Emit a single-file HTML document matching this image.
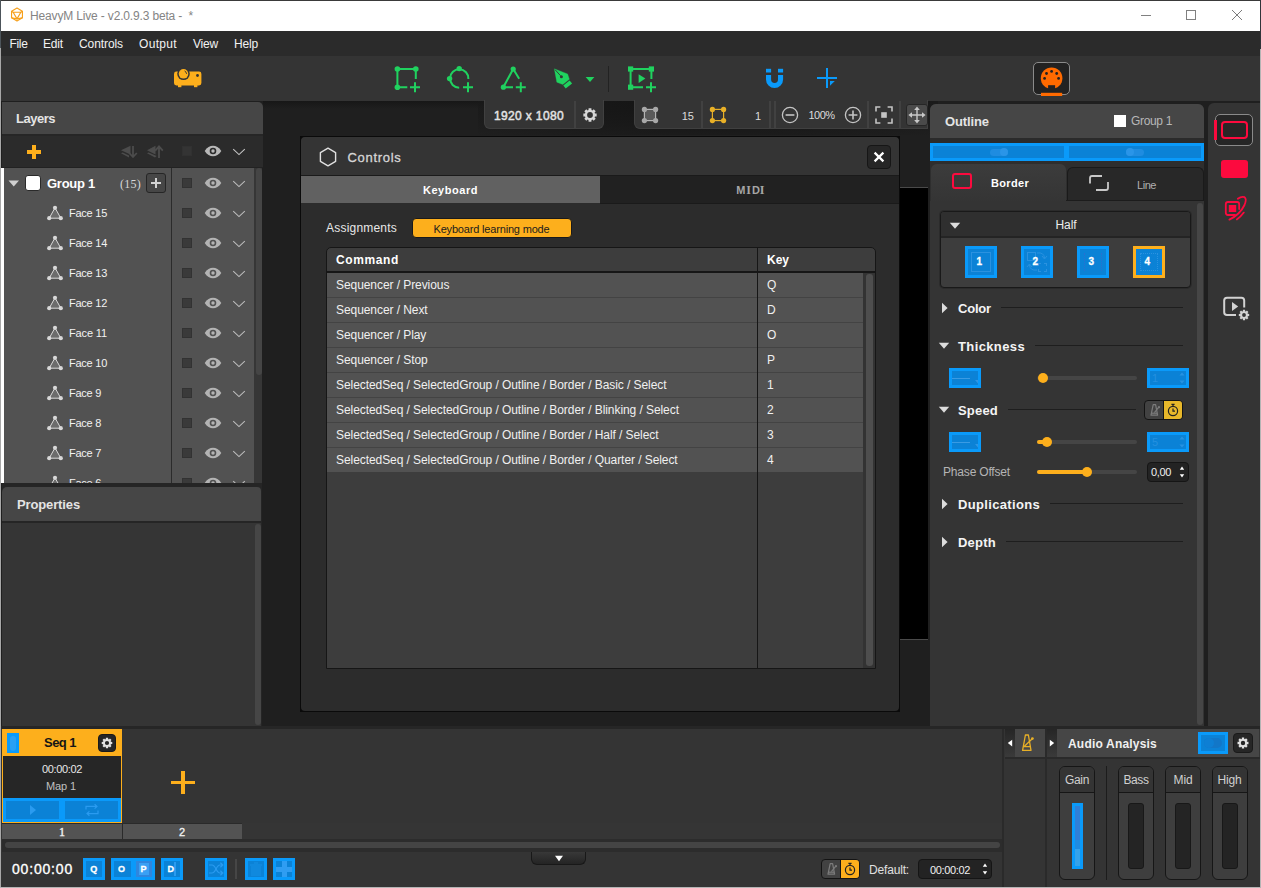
<!DOCTYPE html>
<html><head><meta charset="utf-8"><title>HeavyM Live</title>
<style>
html,body{margin:0;padding:0;}
body{width:1261px;height:888px;overflow:hidden;position:relative;background:#1f1f1f;font-family:"Liberation Sans", sans-serif;}
#app{position:absolute;left:0;top:0;width:1261px;height:888px;overflow:hidden;}
#app div,#app span,#app svg{position:absolute;box-sizing:border-box;}
#app span{line-height:normal;}
</style></head><body><div id="app">
<div style="left:0px;top:0px;width:1261px;height:31px;background:#ffffff;"></div>
<div style="left:0px;top:0px;width:1261px;height:1px;background:#3a3a3a;"></div>
<svg style="left:10px;top:7.2px;" width="14" height="15.75" viewBox="0 0 16 18"><g fill="none" stroke="#f6a01c" stroke-width="1.3" stroke-linejoin="round"><path d="M8 1.2 L14.2 4.8 L14.2 12.4 L8 16 L1.8 12.4 L1.8 4.8 Z"/><path d="M3.6 6 L12.4 6 L8 13.6 Z"/><path d="M1.8 4.8 L3.6 6 M14.2 4.8 L12.4 6 M1.8 12.4 L8 13.6 M14.2 12.4 L8 13.6"/></g></svg>
<span style="left:30.00px;top:9px;font-size:12px;font-weight:400;color:#848484;white-space:pre;letter-spacing:-0.159px;">HeavyM Live - v2.0.9.3 beta -  *</span>
<div style="left:1141px;top:15px;width:10px;height:1px;background:#808080;"></div>
<div style="left:1186px;top:10px;width:10px;height:10px;border:1px solid #808080;"></div>
<svg style="left:1232px;top:10px;" width="10" height="10" viewBox="0 0 10 10"><path d="M0 0 L10 10 M10 0 L0 10" stroke="#7c7c7c" stroke-width="1" fill="none"/></svg>
<div style="left:0px;top:31px;width:1261px;height:25px;background:#2b2b2b;"></div>
<span style="left:9.50px;top:37px;font-size:12px;font-weight:400;color:#f2f2f2;white-space:pre;letter-spacing:-0.336px;">File</span>
<span style="left:43.00px;top:37px;font-size:12px;font-weight:400;color:#f2f2f2;white-space:pre;letter-spacing:-0.172px;">Edit</span>
<span style="left:79.00px;top:37px;font-size:12px;font-weight:400;color:#f2f2f2;white-space:pre;letter-spacing:-0.086px;">Controls</span>
<span style="left:139.00px;top:37px;font-size:12px;font-weight:400;color:#f2f2f2;white-space:pre;letter-spacing:0.328px;">Output</span>
<span style="left:193.00px;top:37px;font-size:12px;font-weight:400;color:#f2f2f2;white-space:pre;letter-spacing:-0.199px;">View</span>
<span style="left:234.00px;top:37px;font-size:12px;font-weight:400;color:#f2f2f2;white-space:pre;letter-spacing:-0.172px;">Help</span>
<div style="left:0px;top:56px;width:1261px;height:45px;background:#343434;"></div>
<div style="left:0px;top:101px;width:1261px;height:628px;background:#1f1f1f;"></div>
<div style="left:263px;top:101px;width:667px;height:8px;background:linear-gradient(#171717,rgba(31,31,31,0));"></div>
<div style="left:2px;top:102px;width:261px;height:32px;background:#464646;border-radius:0 5px 0 0;"></div>
<span style="left:16.00px;top:111px;font-size:13px;font-weight:700;color:#e4e4e4;white-space:pre;letter-spacing:-0.487px;">Layers</span>
<div style="left:2px;top:134px;width:261px;height:2px;background:#262626;"></div>
<div style="left:2px;top:136px;width:261px;height:32px;background:#2b2b2b;"></div>
<div style="left:2px;top:167px;width:261px;height:1px;background:#222222;"></div>
<div style="left:2px;top:168px;width:260px;height:315px;background:#525252;"></div>
<div style="left:1px;top:168px;width:3px;height:315px;background:#ffffff;"></div>
<div style="left:171px;top:168px;width:1px;height:315px;background:#2b2b2b;"></div>
<div style="left:254px;top:168px;width:8px;height:315px;background:#363636;"></div>
<div style="left:256px;top:168px;width:6px;height:207px;background:#454545;border-radius:3px;"></div>
<div style="left:2px;top:483px;width:260px;height:243px;background:#252525;"></div>
<div style="left:2px;top:487px;width:259px;height:34px;background:#464646;border-radius:5px 4px 0 0;"></div>
<span style="left:17.00px;top:497px;font-size:13px;font-weight:700;color:#e4e4e4;white-space:pre;letter-spacing:-0.131px;">Properties</span>
<div style="left:2px;top:523px;width:259px;height:203px;background:#353535;"></div>
<div style="left:255px;top:524px;width:6px;height:201px;background:#464646;border-radius:3px;"></div>
<div style="left:0px;top:726px;width:1261px;height:3px;background:#262626;"></div>
<div style="left:0px;top:729px;width:1261px;height:159px;background:#353535;"></div>
<div style="left:27px;top:150px;width:14px;height:4px;background:#fdaf1c;"></div>
<div style="left:32px;top:145px;width:4px;height:14px;background:#fdaf1c;"></div>
<svg style="left:120px;top:145px;" width="18" height="14" viewBox="0 0 18 14"><g fill="#4c4c4c"><path d="M1 5.2 L10.5 0.8 L10.5 9.6 Z"/><path d="M1 8.2 L9 12.4 L9 10.6 L2.6 7.4 Z"/></g><path d="M13 1 L13 11.5 M9.2 8 L13 12 L16.8 8" fill="none" stroke="#4c4c4c" stroke-width="1.8"/></svg>
<svg style="left:146px;top:145px;" width="18" height="14" viewBox="0 0 18 14"><g fill="#4c4c4c"><path d="M1 5.2 L9.5 0.8 L9.5 9.6 Z"/><path d="M1 8.2 L9 12.4 L10.6 11 L2.6 7.4 Z"/></g><path d="M13 13 L13 2 M9.2 5.6 L13 1.4 L16.8 5.6" fill="none" stroke="#4c4c4c" stroke-width="1.8"/></svg>
<div style="left:182px;top:146px;width:10px;height:10px;background:#343434;border:1px solid #313131;"></div>
<svg style="left:204px;top:145px;" width="18" height="12" viewBox="0 0 18 12"><path d="M0.7 6 C3 2.2 6 0.8 9 0.8 C12 0.8 15 2.2 17.3 6 C15 9.8 12 11.2 9 11.2 C6 11.2 3 9.8 0.7 6 Z" fill="#b8b8b8"/><circle cx="9" cy="6" r="3.3" fill="#2b2b2b"/><circle cx="9" cy="6" r="1.7" fill="#b8b8b8"/></svg>
<svg style="left:232px;top:147.5px;" width="14" height="8" viewBox="0 0 14 8"><path d="M1.2 1.2 L7 6.6 L12.8 1.2" fill="none" stroke="#c4c4c4" stroke-width="1.1"/></svg>
<svg style="left:7px;top:178px;" width="14" height="10" viewBox="0 0 14 10"><path d="M1.5 2.6 L12 2.6 L6.75 8.6 Z" fill="#d0d0d0"/></svg>
<div style="left:25px;top:175px;width:16px;height:16px;background:#ffffff;border:1px solid #2a2a2a;border-radius:3px;"></div>
<span style="left:47.00px;top:176px;font-size:13px;font-weight:700;color:#ffffff;white-space:pre;letter-spacing:-0.263px;">Group 1</span>
<span style="left:120.00px;top:177px;font-size:12px;font-weight:400;color:#d8d8d8;white-space:pre;letter-spacing:0.250px;font-family:'Liberation Serif',serif;">(15)</span>
<div style="left:146px;top:173px;width:20px;height:20px;background:#464646;border:1px solid #262626;border-radius:3px;"></div>
<div style="left:151px;top:182px;width:10px;height:2px;background:#d2d2d2;"></div>
<div style="left:155px;top:178px;width:2px;height:10px;background:#d2d2d2;"></div>
<div style="left:182px;top:178px;width:10px;height:10px;background:#3a3a3a;border:1px solid #323232;"></div>
<svg style="left:204px;top:177px;" width="18" height="12" viewBox="0 0 18 12"><path d="M0.7 6 C3 2.2 6 0.8 9 0.8 C12 0.8 15 2.2 17.3 6 C15 9.8 12 11.2 9 11.2 C6 11.2 3 9.8 0.7 6 Z" fill="#b4b4b4"/><circle cx="9" cy="6" r="3.3" fill="#525252"/><circle cx="9" cy="6" r="1.7" fill="#b4b4b4"/></svg>
<svg style="left:232px;top:179.5px;" width="14" height="8" viewBox="0 0 14 8"><path d="M1.2 1.2 L7 6.6 L12.8 1.2" fill="none" stroke="#bcbcbc" stroke-width="1.1"/></svg>
<div style="left:4px;top:198px;width:250px;height:285px;overflow:hidden;">
<svg style="left:43px;top:7px;" width="16" height="16" viewBox="0 0 16 16"><path d="M8 2.8 L2.2 13.2 L13.8 13.2 Z" fill="#6c6c6c" stroke="#d8d8d8" stroke-width="1"/><circle cx="8" cy="2.8" r="2.1" fill="#d8d8d8"/><circle cx="2.2" cy="13.2" r="2.1" fill="#d8d8d8"/><circle cx="13.8" cy="13.2" r="2.1" fill="#d8d8d8"/></svg>
<span style="left:65.00px;top:9px;font-size:11px;font-weight:400;color:#f2f2f2;white-space:pre;letter-spacing:-0.250px;">Face 15</span>
<div style="left:178px;top:10px;width:10px;height:10px;background:#3a3a3a;border:1px solid #323232;"></div>
<svg style="left:200px;top:9px;" width="18" height="12" viewBox="0 0 18 12"><path d="M0.7 6 C3 2.2 6 0.8 9 0.8 C12 0.8 15 2.2 17.3 6 C15 9.8 12 11.2 9 11.2 C6 11.2 3 9.8 0.7 6 Z" fill="#b4b4b4"/><circle cx="9" cy="6" r="3.3" fill="#525252"/><circle cx="9" cy="6" r="1.7" fill="#b4b4b4"/></svg>
<svg style="left:228px;top:11.5px;" width="14" height="8" viewBox="0 0 14 8"><path d="M1.2 1.2 L7 6.6 L12.8 1.2" fill="none" stroke="#bcbcbc" stroke-width="1.1"/></svg>
<svg style="left:43px;top:37px;" width="16" height="16" viewBox="0 0 16 16"><path d="M8 2.8 L2.2 13.2 L13.8 13.2 Z" fill="#6c6c6c" stroke="#d8d8d8" stroke-width="1"/><circle cx="8" cy="2.8" r="2.1" fill="#d8d8d8"/><circle cx="2.2" cy="13.2" r="2.1" fill="#d8d8d8"/><circle cx="13.8" cy="13.2" r="2.1" fill="#d8d8d8"/></svg>
<span style="left:65.00px;top:39px;font-size:11px;font-weight:400;color:#f2f2f2;white-space:pre;letter-spacing:-0.250px;">Face 14</span>
<div style="left:178px;top:40px;width:10px;height:10px;background:#3a3a3a;border:1px solid #323232;"></div>
<svg style="left:200px;top:39px;" width="18" height="12" viewBox="0 0 18 12"><path d="M0.7 6 C3 2.2 6 0.8 9 0.8 C12 0.8 15 2.2 17.3 6 C15 9.8 12 11.2 9 11.2 C6 11.2 3 9.8 0.7 6 Z" fill="#b4b4b4"/><circle cx="9" cy="6" r="3.3" fill="#525252"/><circle cx="9" cy="6" r="1.7" fill="#b4b4b4"/></svg>
<svg style="left:228px;top:41.5px;" width="14" height="8" viewBox="0 0 14 8"><path d="M1.2 1.2 L7 6.6 L12.8 1.2" fill="none" stroke="#bcbcbc" stroke-width="1.1"/></svg>
<svg style="left:43px;top:67px;" width="16" height="16" viewBox="0 0 16 16"><path d="M8 2.8 L2.2 13.2 L13.8 13.2 Z" fill="#6c6c6c" stroke="#d8d8d8" stroke-width="1"/><circle cx="8" cy="2.8" r="2.1" fill="#d8d8d8"/><circle cx="2.2" cy="13.2" r="2.1" fill="#d8d8d8"/><circle cx="13.8" cy="13.2" r="2.1" fill="#d8d8d8"/></svg>
<span style="left:65.00px;top:69px;font-size:11px;font-weight:400;color:#f2f2f2;white-space:pre;letter-spacing:-0.250px;">Face 13</span>
<div style="left:178px;top:70px;width:10px;height:10px;background:#3a3a3a;border:1px solid #323232;"></div>
<svg style="left:200px;top:69px;" width="18" height="12" viewBox="0 0 18 12"><path d="M0.7 6 C3 2.2 6 0.8 9 0.8 C12 0.8 15 2.2 17.3 6 C15 9.8 12 11.2 9 11.2 C6 11.2 3 9.8 0.7 6 Z" fill="#b4b4b4"/><circle cx="9" cy="6" r="3.3" fill="#525252"/><circle cx="9" cy="6" r="1.7" fill="#b4b4b4"/></svg>
<svg style="left:228px;top:71.5px;" width="14" height="8" viewBox="0 0 14 8"><path d="M1.2 1.2 L7 6.6 L12.8 1.2" fill="none" stroke="#bcbcbc" stroke-width="1.1"/></svg>
<svg style="left:43px;top:97px;" width="16" height="16" viewBox="0 0 16 16"><path d="M8 2.8 L2.2 13.2 L13.8 13.2 Z" fill="#6c6c6c" stroke="#d8d8d8" stroke-width="1"/><circle cx="8" cy="2.8" r="2.1" fill="#d8d8d8"/><circle cx="2.2" cy="13.2" r="2.1" fill="#d8d8d8"/><circle cx="13.8" cy="13.2" r="2.1" fill="#d8d8d8"/></svg>
<span style="left:65.00px;top:99px;font-size:11px;font-weight:400;color:#f2f2f2;white-space:pre;letter-spacing:-0.250px;">Face 12</span>
<div style="left:178px;top:100px;width:10px;height:10px;background:#3a3a3a;border:1px solid #323232;"></div>
<svg style="left:200px;top:99px;" width="18" height="12" viewBox="0 0 18 12"><path d="M0.7 6 C3 2.2 6 0.8 9 0.8 C12 0.8 15 2.2 17.3 6 C15 9.8 12 11.2 9 11.2 C6 11.2 3 9.8 0.7 6 Z" fill="#b4b4b4"/><circle cx="9" cy="6" r="3.3" fill="#525252"/><circle cx="9" cy="6" r="1.7" fill="#b4b4b4"/></svg>
<svg style="left:228px;top:101.5px;" width="14" height="8" viewBox="0 0 14 8"><path d="M1.2 1.2 L7 6.6 L12.8 1.2" fill="none" stroke="#bcbcbc" stroke-width="1.1"/></svg>
<svg style="left:43px;top:127px;" width="16" height="16" viewBox="0 0 16 16"><path d="M8 2.8 L2.2 13.2 L13.8 13.2 Z" fill="#6c6c6c" stroke="#d8d8d8" stroke-width="1"/><circle cx="8" cy="2.8" r="2.1" fill="#d8d8d8"/><circle cx="2.2" cy="13.2" r="2.1" fill="#d8d8d8"/><circle cx="13.8" cy="13.2" r="2.1" fill="#d8d8d8"/></svg>
<span style="left:65.00px;top:129px;font-size:11px;font-weight:400;color:#f2f2f2;white-space:pre;letter-spacing:-0.134px;">Face 11</span>
<div style="left:178px;top:130px;width:10px;height:10px;background:#3a3a3a;border:1px solid #323232;"></div>
<svg style="left:200px;top:129px;" width="18" height="12" viewBox="0 0 18 12"><path d="M0.7 6 C3 2.2 6 0.8 9 0.8 C12 0.8 15 2.2 17.3 6 C15 9.8 12 11.2 9 11.2 C6 11.2 3 9.8 0.7 6 Z" fill="#b4b4b4"/><circle cx="9" cy="6" r="3.3" fill="#525252"/><circle cx="9" cy="6" r="1.7" fill="#b4b4b4"/></svg>
<svg style="left:228px;top:131.5px;" width="14" height="8" viewBox="0 0 14 8"><path d="M1.2 1.2 L7 6.6 L12.8 1.2" fill="none" stroke="#bcbcbc" stroke-width="1.1"/></svg>
<svg style="left:43px;top:157px;" width="16" height="16" viewBox="0 0 16 16"><path d="M8 2.8 L2.2 13.2 L13.8 13.2 Z" fill="#6c6c6c" stroke="#d8d8d8" stroke-width="1"/><circle cx="8" cy="2.8" r="2.1" fill="#d8d8d8"/><circle cx="2.2" cy="13.2" r="2.1" fill="#d8d8d8"/><circle cx="13.8" cy="13.2" r="2.1" fill="#d8d8d8"/></svg>
<span style="left:65.00px;top:159px;font-size:11px;font-weight:400;color:#f2f2f2;white-space:pre;letter-spacing:-0.250px;">Face 10</span>
<div style="left:178px;top:160px;width:10px;height:10px;background:#3a3a3a;border:1px solid #323232;"></div>
<svg style="left:200px;top:159px;" width="18" height="12" viewBox="0 0 18 12"><path d="M0.7 6 C3 2.2 6 0.8 9 0.8 C12 0.8 15 2.2 17.3 6 C15 9.8 12 11.2 9 11.2 C6 11.2 3 9.8 0.7 6 Z" fill="#b4b4b4"/><circle cx="9" cy="6" r="3.3" fill="#525252"/><circle cx="9" cy="6" r="1.7" fill="#b4b4b4"/></svg>
<svg style="left:228px;top:161.5px;" width="14" height="8" viewBox="0 0 14 8"><path d="M1.2 1.2 L7 6.6 L12.8 1.2" fill="none" stroke="#bcbcbc" stroke-width="1.1"/></svg>
<svg style="left:43px;top:187px;" width="16" height="16" viewBox="0 0 16 16"><path d="M8 2.8 L2.2 13.2 L13.8 13.2 Z" fill="#6c6c6c" stroke="#d8d8d8" stroke-width="1"/><circle cx="8" cy="2.8" r="2.1" fill="#d8d8d8"/><circle cx="2.2" cy="13.2" r="2.1" fill="#d8d8d8"/><circle cx="13.8" cy="13.2" r="2.1" fill="#d8d8d8"/></svg>
<span style="left:65.00px;top:189px;font-size:11px;font-weight:400;color:#f2f2f2;white-space:pre;letter-spacing:-0.273px;">Face 9</span>
<div style="left:178px;top:190px;width:10px;height:10px;background:#3a3a3a;border:1px solid #323232;"></div>
<svg style="left:200px;top:189px;" width="18" height="12" viewBox="0 0 18 12"><path d="M0.7 6 C3 2.2 6 0.8 9 0.8 C12 0.8 15 2.2 17.3 6 C15 9.8 12 11.2 9 11.2 C6 11.2 3 9.8 0.7 6 Z" fill="#b4b4b4"/><circle cx="9" cy="6" r="3.3" fill="#525252"/><circle cx="9" cy="6" r="1.7" fill="#b4b4b4"/></svg>
<svg style="left:228px;top:191.5px;" width="14" height="8" viewBox="0 0 14 8"><path d="M1.2 1.2 L7 6.6 L12.8 1.2" fill="none" stroke="#bcbcbc" stroke-width="1.1"/></svg>
<svg style="left:43px;top:217px;" width="16" height="16" viewBox="0 0 16 16"><path d="M8 2.8 L2.2 13.2 L13.8 13.2 Z" fill="#6c6c6c" stroke="#d8d8d8" stroke-width="1"/><circle cx="8" cy="2.8" r="2.1" fill="#d8d8d8"/><circle cx="2.2" cy="13.2" r="2.1" fill="#d8d8d8"/><circle cx="13.8" cy="13.2" r="2.1" fill="#d8d8d8"/></svg>
<span style="left:65.00px;top:219px;font-size:11px;font-weight:400;color:#f2f2f2;white-space:pre;letter-spacing:-0.273px;">Face 8</span>
<div style="left:178px;top:220px;width:10px;height:10px;background:#3a3a3a;border:1px solid #323232;"></div>
<svg style="left:200px;top:219px;" width="18" height="12" viewBox="0 0 18 12"><path d="M0.7 6 C3 2.2 6 0.8 9 0.8 C12 0.8 15 2.2 17.3 6 C15 9.8 12 11.2 9 11.2 C6 11.2 3 9.8 0.7 6 Z" fill="#b4b4b4"/><circle cx="9" cy="6" r="3.3" fill="#525252"/><circle cx="9" cy="6" r="1.7" fill="#b4b4b4"/></svg>
<svg style="left:228px;top:221.5px;" width="14" height="8" viewBox="0 0 14 8"><path d="M1.2 1.2 L7 6.6 L12.8 1.2" fill="none" stroke="#bcbcbc" stroke-width="1.1"/></svg>
<svg style="left:43px;top:247px;" width="16" height="16" viewBox="0 0 16 16"><path d="M8 2.8 L2.2 13.2 L13.8 13.2 Z" fill="#6c6c6c" stroke="#d8d8d8" stroke-width="1"/><circle cx="8" cy="2.8" r="2.1" fill="#d8d8d8"/><circle cx="2.2" cy="13.2" r="2.1" fill="#d8d8d8"/><circle cx="13.8" cy="13.2" r="2.1" fill="#d8d8d8"/></svg>
<span style="left:65.00px;top:249px;font-size:11px;font-weight:400;color:#f2f2f2;white-space:pre;letter-spacing:-0.273px;">Face 7</span>
<div style="left:178px;top:250px;width:10px;height:10px;background:#3a3a3a;border:1px solid #323232;"></div>
<svg style="left:200px;top:249px;" width="18" height="12" viewBox="0 0 18 12"><path d="M0.7 6 C3 2.2 6 0.8 9 0.8 C12 0.8 15 2.2 17.3 6 C15 9.8 12 11.2 9 11.2 C6 11.2 3 9.8 0.7 6 Z" fill="#b4b4b4"/><circle cx="9" cy="6" r="3.3" fill="#525252"/><circle cx="9" cy="6" r="1.7" fill="#b4b4b4"/></svg>
<svg style="left:228px;top:251.5px;" width="14" height="8" viewBox="0 0 14 8"><path d="M1.2 1.2 L7 6.6 L12.8 1.2" fill="none" stroke="#bcbcbc" stroke-width="1.1"/></svg>
<svg style="left:43px;top:277px;" width="16" height="16" viewBox="0 0 16 16"><path d="M8 2.8 L2.2 13.2 L13.8 13.2 Z" fill="#6c6c6c" stroke="#d8d8d8" stroke-width="1"/><circle cx="8" cy="2.8" r="2.1" fill="#d8d8d8"/><circle cx="2.2" cy="13.2" r="2.1" fill="#d8d8d8"/><circle cx="13.8" cy="13.2" r="2.1" fill="#d8d8d8"/></svg>
<span style="left:65.00px;top:279px;font-size:11px;font-weight:400;color:#f2f2f2;white-space:pre;letter-spacing:-0.273px;">Face 6</span>
<div style="left:178px;top:280px;width:10px;height:10px;background:#3a3a3a;border:1px solid #323232;"></div>
<svg style="left:200px;top:279px;" width="18" height="12" viewBox="0 0 18 12"><path d="M0.7 6 C3 2.2 6 0.8 9 0.8 C12 0.8 15 2.2 17.3 6 C15 9.8 12 11.2 9 11.2 C6 11.2 3 9.8 0.7 6 Z" fill="#b4b4b4"/><circle cx="9" cy="6" r="3.3" fill="#525252"/><circle cx="9" cy="6" r="1.7" fill="#b4b4b4"/></svg>
<svg style="left:228px;top:281.5px;" width="14" height="8" viewBox="0 0 14 8"><path d="M1.2 1.2 L7 6.6 L12.8 1.2" fill="none" stroke="#bcbcbc" stroke-width="1.1"/></svg>
</div>
<svg style="left:172px;top:66px;" width="32" height="24" viewBox="0 0 32 24"><g fill="#fdaf1c"><rect x="2" y="5.6" width="27.4" height="13.8" rx="2.4"/><rect x="6" y="19" width="3.4" height="2.2"/><rect x="22" y="19" width="3.4" height="2.2"/></g><circle cx="11.5" cy="7.8" r="6.3" fill="#343434"/><circle cx="11.5" cy="7.8" r="4.8" fill="#fdaf1c"/><circle cx="25.5" cy="9.5" r="1.4" fill="#343434"/><path d="M12.6 5 Q14.4 6 14.6 7.8" stroke="#343434" stroke-width="1" fill="none"/></svg>
<svg style="left:390px;top:60px;" width="40" height="36" viewBox="0 0 40 36"><g transform="translate(-390,-60)"><path d="M397.4 87.3 L397.4 69 L415.8 69 L415.8 79 M397.4 87.3 L407.3 87.3" fill="none" stroke="#20d25f" stroke-width="2"/><circle cx="397.4" cy="69" r="2.8" fill="#20d25f"/><circle cx="415.8" cy="69" r="2.8" fill="#20d25f"/><circle cx="397.4" cy="87.3" r="2.8" fill="#20d25f"/><path d="M410 87.2 L420 87.2 M415 82.2 L415 92.2" stroke="#20d25f" stroke-width="2" fill="none"/></g></svg>
<svg style="left:440px;top:60px;" width="40" height="36" viewBox="0 0 40 36"><g transform="translate(-440,-60)"><path d="M468.4 79 A9.2 9.2 0 1 0 459.2 87.7" fill="none" stroke="#20d25f" stroke-width="2"/><circle cx="459.2" cy="68.6" r="2.7" fill="#20d25f"/><circle cx="449.6" cy="78.6" r="2.7" fill="#20d25f"/><path d="M463 87.2 L473 87.2 M468 82.2 L468 92.2" stroke="#20d25f" stroke-width="2" fill="none"/></g></svg>
<svg style="left:495px;top:60px;" width="40" height="36" viewBox="0 0 40 36"><g transform="translate(-495,-60)"><path d="M519.2 78.8 L513.2 69 L503.3 87.2 L513 87.2" fill="none" stroke="#20d25f" stroke-width="2"/><circle cx="513.2" cy="69" r="2.6" fill="#20d25f"/><circle cx="503.4" cy="87.2" r="2.6" fill="#20d25f"/><path d="M515.8 87.2 L525.8 87.2 M520.8 82.2 L520.8 92.2" stroke="#20d25f" stroke-width="2" fill="none"/></g></svg>
<svg style="left:550px;top:64px;" width="26" height="28" viewBox="0 0 26 28"><g transform="translate(-550,-64)"><path d="M554.3 68.8 L567.6 73.9 L569.4 79.3 L562.8 84.6 L556.8 82.2 Z" fill="#20d25f" stroke="#20d25f" stroke-width="0.3" stroke-linejoin="round"/><path d="M563.3 85.4 L569.6 80.4 L572.1 83.4 L565.7 88.4 Z" fill="#20d25f"/><circle cx="561.4" cy="76.7" r="1.5" fill="#343434"/><path d="M555 69.6 L560.6 75.8" stroke="#343434" stroke-width="0.9"/></g></svg>
<svg style="left:585px;top:76px;" width="10" height="7" viewBox="0 0 10 7"><path d="M0.6 1 L9.4 1 L5 6 Z" fill="#20d25f"/></svg>
<div style="left:608px;top:66px;width:1px;height:26px;background:#222;"></div>
<svg style="left:625px;top:60px;" width="40" height="36" viewBox="0 0 40 36"><g transform="translate(-625,-60)"><path d="M630.6 87.2 L630.6 69 L651.4 69 L651.4 79 M630.6 87.2 L643 87.2" fill="none" stroke="#20d25f" stroke-width="2"/><rect x="628" y="66.4" width="5.2" height="5.2" fill="#20d25f"/><rect x="648.8" y="66.4" width="5.2" height="5.2" fill="#20d25f"/><rect x="628" y="84.6" width="5.2" height="5.2" fill="#20d25f"/><path d="M638.6 74.2 L645.4 78.6 L638.6 83 Z" fill="#20d25f"/><path d="M646 87.2 L656 87.2 M651 82.2 L651 92.2" stroke="#20d25f" stroke-width="2" fill="none"/></g></svg>
<svg style="left:764px;top:66px;" width="22" height="24" viewBox="0 0 22 24"><g transform="translate(-764,-66)" fill="#0a9afa"><rect x="766" y="68.8" width="5.1" height="3.7"/><rect x="778" y="68.8" width="5.1" height="3.7"/><path d="M766 75 L771.1 75 L771.1 79.5 A3.45 3.45 0 0 0 778 79.5 L778 75 L783.1 75 L783.1 79.5 A8.55 8.55 0 0 1 766 79.5 Z"/></g></svg>
<svg style="left:815px;top:66px;" width="24" height="24" viewBox="0 0 24 24"><g transform="translate(-815,-66)"><path d="M817 78 L837 78 M827 68 L827 88" stroke="#0a9afa" stroke-width="2" fill="none"/><path d="M830 81 L834.8 81 L830 85.8 Z" fill="#0a9afa"/></g></svg>
<div style="left:1033px;top:62px;width:37px;height:33px;background:#222222;border:1px solid #8a8a8a;border-radius:5px;"></div>
<svg style="left:1036px;top:64px;" width="32" height="34" viewBox="0 0 32 34"><g transform="translate(-1036,-64)"><circle cx="1051.6" cy="78.2" r="10.8" fill="#ff6a00"/><rect x="1048.1" y="85.2" width="7" height="6" fill="#222"/><g fill="#222"><circle cx="1051.6" cy="71.4" r="1.4"/><circle cx="1046.5" cy="73.5" r="1.4"/><circle cx="1056.7" cy="73.5" r="1.4"/><circle cx="1044.6" cy="78.4" r="1.4"/><circle cx="1058.6" cy="78.4" r="1.4"/></g><rect x="1041" y="92.8" width="21.2" height="3.2" fill="#ff6a00"/></g></svg>
<div style="left:478px;top:101px;width:460px;height:34px;background:radial-gradient(ellipse at 50% 0%, #141414 0%, #191919 55%, rgba(31,31,31,0) 100%);"></div>
<div style="left:484px;top:100px;width:120px;height:29px;background:#343434;border:1px solid #404040;border-top:none;border-radius:0 0 6px 6px;"></div>
<span style="left:494.00px;top:108.5px;font-size:12px;font-weight:400;color:#e4e4e4;white-space:pre;letter-spacing:0.358px;-webkit-text-stroke:0.45px #e4e4e4;">1920 x 1080</span>
<div style="left:574px;top:101px;width:2px;height:27px;background:#414141;"></div>
<svg style="left:581px;top:106px;" width="18" height="18" viewBox="0 0 18 18"><path d="M7.50 4.02 L7.60 2.35 L10.40 2.35 L10.50 4.02 L11.46 4.42 L12.72 3.31 L14.69 5.28 L13.58 6.54 L13.98 7.50 L15.65 7.60 L15.65 10.40 L13.98 10.50 L13.58 11.46 L14.69 12.72 L12.72 14.69 L11.46 13.58 L10.50 13.98 L10.40 15.65 L7.60 15.65 L7.50 13.98 L6.54 13.58 L5.28 14.69 L3.31 12.72 L4.42 11.46 L4.02 10.50 L2.35 10.40 L2.35 7.60 L4.02 7.50 L4.42 6.54 L3.31 5.28 L5.28 3.31 L6.54 4.42 Z M6.10 9.00 A2.9 2.9 0 1 0 11.90 9.00 A2.9 2.9 0 1 0 6.10 9.00 Z" fill="#d8d8d8" fill-rule="evenodd"/></svg>
<div style="left:634px;top:100px;width:294px;height:29px;background:#343434;border:1px solid #404040;border-top:none;border-radius:0 0 0 6px;"></div>
<svg style="left:640px;top:105px;" width="20" height="20" viewBox="0 0 20 20"><rect x="4.4" y="4.4" width="11.2" height="11.2" fill="#5a5a5a" stroke="#b4b4b4" stroke-width="1.2"/><circle cx="4.4" cy="4.4" r="2.6" fill="#a8a8a8"/><circle cx="4.4" cy="15.6" r="2.6" fill="#a8a8a8"/><circle cx="15.6" cy="4.4" r="2.6" fill="#a8a8a8"/><circle cx="15.6" cy="15.6" r="2.6" fill="#a8a8a8"/></svg>
<span style="left:681.75px;top:109.5px;font-size:11px;font-weight:400;color:#dcdcdc;white-space:pre;">15</span>
<div style="left:701px;top:101px;width:2px;height:27px;background:#414141;"></div>
<svg style="left:708px;top:105px;" width="20" height="20" viewBox="0 0 20 20"><rect x="4.4" y="4.4" width="11.2" height="11.2" fill="#343434" stroke="#e8b027" stroke-width="1.2"/><circle cx="4.4" cy="4.4" r="2.6" fill="#e8b027"/><circle cx="4.4" cy="15.6" r="2.6" fill="#e8b027"/><circle cx="15.6" cy="4.4" r="2.6" fill="#e8b027"/><circle cx="15.6" cy="15.6" r="2.6" fill="#e8b027"/></svg>
<span style="left:754.88px;top:109.5px;font-size:11px;font-weight:400;color:#dcdcdc;white-space:pre;">1</span>
<div style="left:769px;top:101px;width:2px;height:27px;background:#414141;"></div>
<div style="left:774px;top:101px;width:2px;height:27px;background:#414141;"></div>
<svg style="left:780px;top:105px;" width="20" height="20" viewBox="0 0 20 20"><circle cx="10" cy="10" r="7.6" fill="none" stroke="#c4c4c4" stroke-width="1.3"/><path d="M5.6 10 L14.4 10" stroke="#c4c4c4" stroke-width="1.6"/></svg>
<span style="left:808.50px;top:109px;font-size:11px;font-weight:400;color:#dcdcdc;white-space:pre;letter-spacing:-0.535px;">100%</span>
<svg style="left:843px;top:105px;" width="20" height="20" viewBox="0 0 20 20"><circle cx="10" cy="10" r="7.6" fill="none" stroke="#c4c4c4" stroke-width="1.3"/><path d="M5.6 10 L14.4 10 M10 5.6 L10 14.4" stroke="#c4c4c4" stroke-width="1.6"/></svg>
<div style="left:867px;top:101px;width:2px;height:27px;background:#414141;"></div>
<svg style="left:874px;top:105px;" width="20" height="20" viewBox="0 0 20 20"><path d="M2 6.4 L2 2 L6.4 2 M13.6 2 L18 2 L18 6.4 M18 13.6 L18 18 L13.6 18 M6.4 18 L2 18 L2 13.6" fill="none" stroke="#c4c4c4" stroke-width="1.6"/><rect x="7.2" y="7.2" width="5.6" height="5.6" fill="#c4c4c4"/></svg>
<div style="left:899px;top:101px;width:2px;height:27px;background:#414141;"></div>
<div style="left:906px;top:104px;width:22px;height:22px;background:#4a4a4a;border:1px solid #262626;border-radius:3px;"></div>
<svg style="left:907px;top:105px;" width="20" height="20" viewBox="0 0 20 20"><g fill="none" stroke="#c8c8c8" stroke-width="1.4"><path d="M10 3 L10 17 M3 10 L17 10"/></g><g fill="#c8c8c8"><path d="M10 1.4 L12.8 5 L7.2 5 Z"/><path d="M10 18.6 L12.8 15 L7.2 15 Z"/><path d="M1.4 10 L5 7.2 L5 12.8 Z"/><path d="M18.6 10 L15 7.2 L15 12.8 Z"/></g></svg>
<div style="left:900px;top:187px;width:28px;height:1px;background:#4a4a4a;"></div>
<div style="left:900px;top:188px;width:28px;height:451px;background:#000000;"></div>
<div style="left:900px;top:639px;width:28px;height:1px;background:#4a4a4a;"></div>
<div style="left:300px;top:136px;width:600px;height:576px;background:#0a0a0a;"></div>
<div style="left:301px;top:137px;width:598px;height:574px;background:#2c2c2c;border-radius:5px 5px 4px 4px;"></div>
<div style="left:301px;top:137px;width:598px;height:38px;background:#343434;border-radius:4px 4px 0 0;"></div>
<svg style="left:318px;top:146px;" width="20" height="22" viewBox="0 0 20 22"><path d="M10 2.2 L17.6 6.6 L17.6 15.4 L10 19.8 L2.4 15.4 L2.4 6.6 Z" fill="none" stroke="#e0e0e0" stroke-width="1.4" stroke-linejoin="round"/></svg>
<span style="left:347.50px;top:150px;font-size:13px;font-weight:400;color:#d6d6d6;white-space:pre;letter-spacing:0.697px;-webkit-text-stroke:0.3px #d6d6d6;">Controls</span>
<div style="left:867px;top:145px;width:24px;height:24px;background:#262626;border:1px solid #161616;border-radius:4px;"></div>
<svg style="left:872px;top:150px;" width="14" height="14" viewBox="0 0 14 14"><path d="M2.6 2.6 L11.4 11.4 M11.4 2.6 L2.6 11.4" stroke="#ffffff" stroke-width="2.2" fill="none"/></svg>
<div style="left:301px;top:175px;width:598px;height:1px;background:#1a1a1a;"></div>
<div style="left:301px;top:176px;width:299px;height:27px;background:#616161;"></div>
<div style="left:600px;top:176px;width:299px;height:27px;background:#212121;"></div>
<div style="left:600px;top:203px;width:299px;height:1px;background:#1a1a1a;"></div>
<span style="left:423.00px;top:184px;font-size:11px;font-weight:700;color:#ffffff;white-space:pre;letter-spacing:0.531px;">Keyboard</span>
<span style="left:736.30px;top:184px;font-size:11px;font-weight:700;color:#a6a6a6;white-space:pre;">M</span>
<span style="left:746.20px;top:183px;font-size:12px;font-weight:700;color:#a6a6a6;white-space:pre;font-family:'Liberation Serif',serif;">I</span>
<span style="left:752.00px;top:184px;font-size:11px;font-weight:700;color:#a6a6a6;white-space:pre;">D</span>
<span style="left:759.80px;top:183px;font-size:12px;font-weight:700;color:#a6a6a6;white-space:pre;font-family:'Liberation Serif',serif;">I</span>
<span style="left:326.00px;top:221px;font-size:12px;font-weight:400;color:#e8e8e8;white-space:pre;letter-spacing:0.209px;">Assignments</span>
<div style="left:412px;top:218px;width:160px;height:20px;background:#fdaf1c;border:1px solid #1a1a1a;border-radius:4px;"></div>
<span style="left:433.50px;top:222.5px;font-size:11px;font-weight:400;color:#1c1c1c;white-space:pre;letter-spacing:-0.175px;">Keyboard learning mode</span>
<div style="left:326px;top:247px;width:550px;height:422px;background:#3d3d3d;border:1px solid #161616;border-radius:5px 5px 0 0;"></div>
<div style="left:327px;top:271px;width:548px;height:2px;background:#161616;"></div>
<span style="left:336.00px;top:253px;font-size:12px;font-weight:700;color:#ffffff;white-space:pre;letter-spacing:0.618px;">Command</span>
<span style="left:767.00px;top:253px;font-size:12px;font-weight:700;color:#ffffff;white-space:pre;letter-spacing:-0.005px;">Key</span>
<div style="left:757px;top:248px;width:1px;height:420px;background:#161616;"></div>
<div style="left:327px;top:273px;width:430px;height:24px;background:#525252;"></div>
<div style="left:758px;top:273px;width:105px;height:24px;background:#525252;"></div>
<div style="left:327px;top:297px;width:430px;height:1px;background:#434343;"></div>
<div style="left:758px;top:297px;width:105px;height:1px;background:#434343;"></div>
<span style="left:336.00px;top:278px;font-size:12px;font-weight:400;color:#f0f0f0;white-space:pre;letter-spacing:-0.070px;">Sequencer / Previous</span>
<span style="left:767.00px;top:278px;font-size:12px;font-weight:400;color:#f0f0f0;white-space:pre;">Q</span>
<div style="left:327px;top:298px;width:430px;height:24px;background:#525252;"></div>
<div style="left:758px;top:298px;width:105px;height:24px;background:#525252;"></div>
<div style="left:327px;top:322px;width:430px;height:1px;background:#434343;"></div>
<div style="left:758px;top:322px;width:105px;height:1px;background:#434343;"></div>
<span style="left:336.00px;top:303px;font-size:12px;font-weight:400;color:#f0f0f0;white-space:pre;letter-spacing:-0.070px;">Sequencer / Next</span>
<span style="left:767.00px;top:303px;font-size:12px;font-weight:400;color:#f0f0f0;white-space:pre;">D</span>
<div style="left:327px;top:323px;width:430px;height:24px;background:#525252;"></div>
<div style="left:758px;top:323px;width:105px;height:24px;background:#525252;"></div>
<div style="left:327px;top:347px;width:430px;height:1px;background:#434343;"></div>
<div style="left:758px;top:347px;width:105px;height:1px;background:#434343;"></div>
<span style="left:336.00px;top:328px;font-size:12px;font-weight:400;color:#f0f0f0;white-space:pre;letter-spacing:-0.070px;">Sequencer / Play</span>
<span style="left:767.00px;top:328px;font-size:12px;font-weight:400;color:#f0f0f0;white-space:pre;">O</span>
<div style="left:327px;top:348px;width:430px;height:24px;background:#525252;"></div>
<div style="left:758px;top:348px;width:105px;height:24px;background:#525252;"></div>
<div style="left:327px;top:372px;width:430px;height:1px;background:#434343;"></div>
<div style="left:758px;top:372px;width:105px;height:1px;background:#434343;"></div>
<span style="left:336.00px;top:353px;font-size:12px;font-weight:400;color:#f0f0f0;white-space:pre;letter-spacing:-0.070px;">Sequencer / Stop</span>
<span style="left:767.00px;top:353px;font-size:12px;font-weight:400;color:#f0f0f0;white-space:pre;">P</span>
<div style="left:327px;top:373px;width:430px;height:24px;background:#525252;"></div>
<div style="left:758px;top:373px;width:105px;height:24px;background:#525252;"></div>
<div style="left:327px;top:397px;width:430px;height:1px;background:#434343;"></div>
<div style="left:758px;top:397px;width:105px;height:1px;background:#434343;"></div>
<span style="left:336.00px;top:378px;font-size:12px;font-weight:400;color:#f0f0f0;white-space:pre;letter-spacing:-0.070px;">SelectedSeq / SelectedGroup / Outline / Border / Basic / Select</span>
<span style="left:767.00px;top:378px;font-size:12px;font-weight:400;color:#f0f0f0;white-space:pre;">1</span>
<div style="left:327px;top:398px;width:430px;height:24px;background:#525252;"></div>
<div style="left:758px;top:398px;width:105px;height:24px;background:#525252;"></div>
<div style="left:327px;top:422px;width:430px;height:1px;background:#434343;"></div>
<div style="left:758px;top:422px;width:105px;height:1px;background:#434343;"></div>
<span style="left:336.00px;top:403px;font-size:12px;font-weight:400;color:#f0f0f0;white-space:pre;letter-spacing:-0.070px;">SelectedSeq / SelectedGroup / Outline / Border / Blinking / Select</span>
<span style="left:767.00px;top:403px;font-size:12px;font-weight:400;color:#f0f0f0;white-space:pre;">2</span>
<div style="left:327px;top:423px;width:430px;height:24px;background:#525252;"></div>
<div style="left:758px;top:423px;width:105px;height:24px;background:#525252;"></div>
<div style="left:327px;top:447px;width:430px;height:1px;background:#434343;"></div>
<div style="left:758px;top:447px;width:105px;height:1px;background:#434343;"></div>
<span style="left:336.00px;top:428px;font-size:12px;font-weight:400;color:#f0f0f0;white-space:pre;letter-spacing:-0.070px;">SelectedSeq / SelectedGroup / Outline / Border / Half / Select</span>
<span style="left:767.00px;top:428px;font-size:12px;font-weight:400;color:#f0f0f0;white-space:pre;">3</span>
<div style="left:327px;top:448px;width:430px;height:24px;background:#525252;"></div>
<div style="left:758px;top:448px;width:105px;height:24px;background:#525252;"></div>
<div style="left:327px;top:472px;width:430px;height:1px;background:#434343;"></div>
<div style="left:758px;top:472px;width:105px;height:1px;background:#434343;"></div>
<span style="left:336.00px;top:453px;font-size:12px;font-weight:400;color:#f0f0f0;white-space:pre;letter-spacing:-0.070px;">SelectedSeq / SelectedGroup / Outline / Border / Quarter / Select</span>
<span style="left:767.00px;top:453px;font-size:12px;font-weight:400;color:#f0f0f0;white-space:pre;">4</span>
<div style="left:327px;top:472px;width:430px;height:1px;background:#3d3d3d;"></div>
<div style="left:758px;top:472px;width:105px;height:1px;background:#3d3d3d;"></div>
<div style="left:863px;top:273px;width:12px;height:395px;background:#333333;"></div>
<div style="left:866px;top:274px;width:7px;height:392px;background:#4e4e4e;border-radius:3px;"></div>
<div style="left:930px;top:104px;width:274px;height:622px;background:#343434;border-radius:6px 6px 0 0;"></div>
<div style="left:930px;top:104px;width:274px;height:34px;background:#464646;border-radius:6px 6px 0 0;"></div>
<span style="left:945.00px;top:114px;font-size:13px;font-weight:700;color:#e4e4e4;white-space:pre;letter-spacing:-0.112px;">Outline</span>
<div style="left:1114px;top:115px;width:12px;height:12px;background:#ffffff;"></div>
<span style="left:1131.00px;top:114px;font-size:12px;font-weight:400;color:#b8b8b8;white-space:pre;letter-spacing:-0.337px;">Group 1</span>
<div style="left:930px;top:138px;width:274px;height:5px;background:#2b2b2b;"></div>
<div style="left:930px;top:143px;width:274px;height:18px;background:#0a9afa;"></div>
<div style="left:933px;top:146px;width:131px;height:12px;background:#0b82d6;"></div>
<div style="left:1069px;top:146px;width:132px;height:12px;background:#0b82d6;"></div>
<div style="left:990px;top:148.5px;width:18px;height:7px;background:#1f8ce0;border-radius:4px;"></div>
<div style="left:1126px;top:148.5px;width:18px;height:7px;background:#1f8ce0;border-radius:4px;"></div>
<div style="left:1000px;top:148px;width:8px;height:8px;background:#2a95e8;border-radius:4px;"></div>
<div style="left:1126px;top:148px;width:8px;height:8px;background:#2a95e8;border-radius:4px;"></div>
<div style="left:930px;top:161px;width:274px;height:3px;background:#2e2e2e;"></div>
<div style="left:930px;top:164px;width:274px;height:40px;background:#2e2e2e;"></div>
<div style="left:931px;top:164px;width:135px;height:40px;background:linear-gradient(#3c3c3c,#343434);border-radius:6px 6px 0 0;"></div>
<div style="left:1067px;top:167px;width:137px;height:34px;background:#282828;border:1px solid #1a1a1a;border-bottom:none;border-radius:6px 6px 0 0;"></div>
<div style="left:952px;top:173px;width:20px;height:16px;border:2px solid #fc0a3e;border-radius:3px;"></div>
<span style="left:991.00px;top:177px;font-size:11px;font-weight:700;color:#ffffff;white-space:pre;letter-spacing:0.323px;">Border</span>
<svg style="left:1088px;top:173px;" width="24" height="20" viewBox="0 0 24 20"><path d="M2 10.6 L2 5 Q2 3 4 3 L14 3" fill="none" stroke="#c8c8c8" stroke-width="1.8"/><path d="M20 9 L20 15 Q20 17 18 17 L8 17" fill="none" stroke="#c8c8c8" stroke-width="1.8"/></svg>
<span style="left:1137.00px;top:179px;font-size:11px;font-weight:400;color:#b0b0b0;white-space:pre;letter-spacing:-0.449px;">Line</span>
<div style="left:930px;top:201px;width:274px;height:525px;background:#343434;"></div>
<div style="left:1066px;top:200px;width:138px;height:1px;background:#1c1c1c;"></div>
<div style="left:1197px;top:203px;width:6px;height:522px;background:#464646;border-radius:3px;"></div>
<div style="left:940px;top:211px;width:251px;height:77px;background:#3d3d3d;border:1px solid #191919;border-radius:4px;box-shadow:0 0 0 1px #2b2b2b;"></div>
<div style="left:941px;top:212px;width:249px;height:24px;background:#2f2f2f;border-radius:3px 3px 0 0;"></div>
<div style="left:941px;top:236px;width:249px;height:2px;background:#242424;"></div>
<svg style="left:949px;top:222px;" width="12" height="8" viewBox="0 0 12 8"><path d="M0.8 0.8 L11.2 0.8 L6 6.8 Z" fill="#dcdcdc"/></svg>
<span style="left:1055.50px;top:218px;font-size:12px;font-weight:400;color:#ececec;white-space:pre;letter-spacing:-0.086px;">Half</span>
<div style="left:965px;top:246px;width:32px;height:32px;background:#0b82d6;border:3px solid #0a9afa;"></div>
<div style="left:1021px;top:246px;width:32px;height:32px;background:#0b82d6;border:3px solid #0a9afa;"></div>
<div style="left:1077px;top:246px;width:32px;height:32px;background:#0b82d6;border:3px solid #0a9afa;"></div>
<div style="left:1133px;top:246px;width:32px;height:32px;background:#0b82d6;border:3px solid #fdaf1c;"></div>
<div style="left:971px;top:252px;width:20px;height:20px;border:1px solid #2a92e0;"></div>
<div style="left:1027px;top:252px;width:9px;height:9px;border:1px solid #2a92e0;"></div>
<div style="left:1038px;top:263px;width:9px;height:9px;border:1px dashed #2a92e0;"></div>
<svg style="left:1036px;top:251px;" width="12" height="10" viewBox="0 0 12 10"><path d="M1 2 Q8 1 8.5 7 M6 5 L8.5 8 L11 5" fill="none" stroke="#2a92e0" stroke-width="1"/></svg>
<svg style="left:1026px;top:262px;" width="12" height="10" viewBox="0 0 12 10"><path d="M11 8 Q4 9 3.5 3 M1 5 L3.5 2 L6 5" fill="none" stroke="#2a92e0" stroke-width="1"/></svg>
<div style="left:1084px;top:253px;width:18px;height:18px;border-left:1px dotted #2a6fd0;border-right:1px dotted #2a6fd0;"></div>
<div style="left:1140px;top:253px;width:18px;height:18px;border:1px dotted #2a92e0;"></div>
<span style="left:976.62px;top:256px;font-size:10px;font-weight:700;color:#ffffff;white-space:pre;-webkit-text-stroke:0.3px #fff;">1</span>
<span style="left:1032.62px;top:256px;font-size:10px;font-weight:700;color:#ffffff;white-space:pre;-webkit-text-stroke:0.3px #fff;">2</span>
<span style="left:1088.62px;top:256px;font-size:10px;font-weight:700;color:#ffffff;white-space:pre;-webkit-text-stroke:0.3px #fff;">3</span>
<span style="left:1144.62px;top:256px;font-size:10px;font-weight:700;color:#ffffff;white-space:pre;-webkit-text-stroke:0.3px #fff;">4</span>
<svg style="left:941px;top:302px;" width="8" height="12" viewBox="0 0 8 12"><path d="M1 0.8 L1 11.2 L6.6 6 Z" fill="#dcdcdc"/></svg>
<span style="left:958.00px;top:301px;font-size:13px;font-weight:700;color:#f4f4f4;white-space:pre;letter-spacing:-0.191px;">Color</span>
<div style="left:1001px;top:307px;width:182px;height:1px;background:#1e1e1e;"></div>
<svg style="left:938px;top:342px;" width="12" height="8" viewBox="0 0 12 8"><path d="M0.8 0.8 L11.2 0.8 L6 6.8 Z" fill="#dcdcdc"/></svg>
<span style="left:958.00px;top:339px;font-size:13px;font-weight:700;color:#f4f4f4;white-space:pre;letter-spacing:0.378px;">Thickness</span>
<div style="left:1035px;top:345px;width:148px;height:1px;background:#1e1e1e;"></div>
<svg style="left:938px;top:406px;" width="12" height="8" viewBox="0 0 12 8"><path d="M0.8 0.8 L11.2 0.8 L6 6.8 Z" fill="#dcdcdc"/></svg>
<span style="left:958.00px;top:403px;font-size:13px;font-weight:700;color:#f4f4f4;white-space:pre;letter-spacing:0.197px;">Speed</span>
<div style="left:1008px;top:409px;width:128px;height:1px;background:#1e1e1e;"></div>
<svg style="left:941px;top:498px;" width="8" height="12" viewBox="0 0 8 12"><path d="M1 0.8 L1 11.2 L6.6 6 Z" fill="#dcdcdc"/></svg>
<span style="left:958.00px;top:497px;font-size:13px;font-weight:700;color:#f4f4f4;white-space:pre;letter-spacing:0.332px;">Duplications</span>
<div style="left:1050px;top:503px;width:133px;height:1px;background:#1e1e1e;"></div>
<svg style="left:941px;top:536px;" width="8" height="12" viewBox="0 0 8 12"><path d="M1 0.8 L1 11.2 L6.6 6 Z" fill="#dcdcdc"/></svg>
<span style="left:958.00px;top:535px;font-size:13px;font-weight:700;color:#f4f4f4;white-space:pre;letter-spacing:0.231px;">Depth</span>
<div style="left:1006px;top:541px;width:177px;height:1px;background:#1e1e1e;"></div>
<div style="left:949px;top:368px;width:32px;height:20px;background:#0b82d6;border:3px solid #0a9afa;"></div>
<div style="left:952px;top:378px;width:18px;height:1px;background:#3a9be4;"></div>
<svg style="left:975px;top:380px;" width="4" height="4" viewBox="0 0 4 4"><path d="M0 0 L3 0 L3 3.5 Z" fill="#2f96e4"/></svg>
<div style="left:1037px;top:376px;width:100px;height:4px;background:#454545;border-radius:2px;"></div>
<div style="left:1037.5px;top:373px;width:10px;height:10px;background:#fdaf1c;border-radius:50%;"></div>
<div style="left:1147px;top:368px;width:42px;height:20px;background:#0b82d6;border:3px solid #0a9afa;"></div>
<span style="left:1152.00px;top:372px;font-size:11px;font-weight:400;color:#2490e0;white-space:pre;">1</span>
<svg style="left:1178px;top:371px;" width="8" height="14" viewBox="0 0 8 14"><path d="M4 1.5 L6.6 4.5 L1.4 4.5 Z M4 12.5 L6.6 9.5 L1.4 9.5 Z" fill="#2792e2"/></svg>
<div style="left:1144px;top:400px;width:39px;height:20px;background:#424242;border:1px solid #141414;border-radius:4px;"></div>
<div style="left:1164px;top:401px;width:18px;height:18px;background:#e8b82a;border-radius:0 3px 3px 0;"></div>
<div style="left:1163px;top:401px;width:1px;height:18px;background:#141414;"></div>
<svg style="left:1147.5px;top:403.0px;" width="14" height="14" viewBox="0 0 14 14"><g fill="none" stroke="#7c7c7c" stroke-width="1.2" stroke-linejoin="round"><path d="M5.2 1.6 L7.6 1.6 L9.6 12.2 L3 12.2 Z"/><path d="M3.4 10.2 L9.2 10.2"/><path d="M6.4 9.6 L10.8 4.2"/></g><circle cx="11" cy="4.2" r="1.1" fill="#7c7c7c"/></svg>
<svg style="left:1166.0px;top:402.0px;" width="14" height="16" viewBox="0 0 14 16"><g fill="none" stroke="#222" stroke-width="1.2"><circle cx="7" cy="9" r="4.6"/><path d="M7 4.4 L7 2.6 M5.4 2.4 L8.6 2.4"/><path d="M7 6.4 L7 9.2 L9 9.2"/></g></svg>
<div style="left:949px;top:432px;width:32px;height:20px;background:#0b82d6;border:3px solid #0a9afa;"></div>
<div style="left:952px;top:442px;width:18px;height:1px;background:#3a9be4;"></div>
<svg style="left:975px;top:444px;" width="4" height="4" viewBox="0 0 4 4"><path d="M0 0 L3 0 L3 3.5 Z" fill="#2f96e4"/></svg>
<div style="left:1037px;top:440px;width:100px;height:4px;background:#454545;border-radius:2px;"></div>
<div style="left:1037px;top:440px;width:9.5px;height:4px;background:#fdaf1c;border-radius:2px;"></div>
<div style="left:1041.5px;top:437px;width:10px;height:10px;background:#fdaf1c;border-radius:50%;"></div>
<div style="left:1147px;top:432px;width:42px;height:20px;background:#0b82d6;border:3px solid #0a9afa;"></div>
<span style="left:1152.00px;top:436px;font-size:11px;font-weight:400;color:#2490e0;white-space:pre;">5</span>
<svg style="left:1178px;top:435px;" width="8" height="14" viewBox="0 0 8 14"><path d="M4 1.5 L6.6 4.5 L1.4 4.5 Z M4 12.5 L6.6 9.5 L1.4 9.5 Z" fill="#2792e2"/></svg>
<span style="left:943.00px;top:465px;font-size:12px;font-weight:400;color:#b4b4b4;white-space:pre;letter-spacing:-0.180px;">Phase Offset</span>
<div style="left:1037px;top:470px;width:100px;height:4px;background:#454545;border-radius:2px;"></div>
<div style="left:1037px;top:470px;width:50px;height:4px;background:#fdaf1c;border-radius:2px;"></div>
<div style="left:1082px;top:467px;width:10px;height:10px;background:#fdaf1c;border-radius:50%;"></div>
<div style="left:1147px;top:462px;width:42px;height:20px;background:#232323;border:1px solid #151515;border-radius:4px;"></div>
<span style="left:1151.00px;top:466px;font-size:11px;font-weight:400;color:#f0f0f0;white-space:pre;letter-spacing:-0.355px;">0,00</span>
<svg style="left:1178px;top:465px;" width="8" height="14" viewBox="0 0 8 14"><path d="M4 1.6 L6.2 4.8 L1.8 4.8 Z M4 12.4 L6.2 9.2 L1.8 9.2 Z" fill="#ffffff"/></svg>
<div style="left:1208px;top:103px;width:52px;height:623px;background:#343434;border-radius:6px 0 0 0;"></div>
<div style="left:1215px;top:114px;width:38px;height:32px;background:#262626;border:1px solid #8a8a8a;border-radius:5px;"></div>
<div style="left:1214px;top:120px;width:3px;height:20px;background:#fc0a3e;"></div>
<div style="left:1221px;top:121px;width:27px;height:18px;border:2px solid #fc0a3e;border-radius:4px;"></div>
<div style="left:1221px;top:160px;width:27px;height:18px;background:#fc0a3e;border-radius:3px;"></div>
<svg style="left:1220px;top:194px;" width="30" height="30" viewBox="0 0 30 30"><g transform="translate(-1220,-194)" fill="none" stroke="#fc0a3e" stroke-width="1.8" stroke-linecap="round"><path d="M1235 215 L1228 215 Q1225.8 215 1225.8 212.8 L1225.8 204.2 Q1225.8 202 1228 202 L1237 202 Q1239.2 202 1239.2 204.2 L1239.2 209"/><rect x="1228.8" y="205" width="7.4" height="7" fill="#fc0a3e" stroke="none"/><path d="M1237.8 198.8 Q1241.5 196 1244.6 197.2 Q1247 199 1244.5 205 Q1240 214.5 1229.4 219.6"/><path d="M1243.8 212.6 Q1241 216.6 1236.8 219.4"/></g></svg>
<svg style="left:1220px;top:292px;" width="34" height="32" viewBox="0 0 34 32"><g transform="translate(-1220,-292)"><path d="M1236 315 L1227 315 Q1224.2 315 1224.2 312.2 L1224.2 300.6 Q1224.2 297.8 1227 297.8 L1241.4 297.8 Q1244.2 297.8 1244.2 300.6 L1244.2 307.6" fill="none" stroke="#d2d2d2" stroke-width="2"/><path d="M1232 302 L1238.2 306.5 L1232 311 Z" fill="#d2d2d2"/><path d="M1242.85 311.17 L1242.91 309.81 L1245.09 309.81 L1245.15 311.17 L1245.89 311.48 L1246.90 310.56 L1248.44 312.10 L1247.52 313.11 L1247.83 313.85 L1249.19 313.91 L1249.19 316.09 L1247.83 316.15 L1247.52 316.89 L1248.44 317.90 L1246.90 319.44 L1245.89 318.52 L1245.15 318.83 L1245.09 320.19 L1242.91 320.19 L1242.85 318.83 L1242.11 318.52 L1241.10 319.44 L1239.56 317.90 L1240.48 316.89 L1240.17 316.15 L1238.81 316.09 L1238.81 313.91 L1240.17 313.85 L1240.48 313.11 L1239.56 312.10 L1241.10 310.56 L1242.11 311.48 Z M1242.10 315.00 A1.9 1.9 0 1 0 1245.90 315.00 A1.9 1.9 0 1 0 1242.10 315.00 Z" fill="#d2d2d2" fill-rule="evenodd"/></g></svg>
<div style="left:0px;top:726px;width:1261px;height:3px;background:#262626;"></div>
<div style="left:2px;top:729px;width:1001px;height:94px;background:#343434;"></div>
<div style="left:2px;top:729px;width:120px;height:94px;background:#262626;border:1px solid #fdaf1c;"></div>
<div style="left:3px;top:730px;width:118px;height:26px;background:#fdaf1c;"></div>
<div style="left:7px;top:733px;width:12px;height:20px;background:#0a9afa;"></div>
<div style="left:10px;top:736px;width:6px;height:15px;background:#2aa0f4;border-radius:3px;"></div>
<span style="left:44.00px;top:735px;font-size:13px;font-weight:700;color:#161616;white-space:pre;letter-spacing:-0.537px;">Seq 1</span>
<div style="left:98px;top:734px;width:18px;height:18px;background:#262626;border:1px solid #1a1a1a;border-radius:4px;"></div>
<svg style="left:98px;top:734px;" width="18" height="18" viewBox="0 0 18 18"><path d="M7.82 5.07 L7.89 3.72 L10.11 3.72 L10.18 5.07 L10.94 5.39 L11.95 4.48 L13.52 6.05 L12.61 7.06 L12.93 7.82 L14.28 7.89 L14.28 10.11 L12.93 10.18 L12.61 10.94 L13.52 11.95 L11.95 13.52 L10.94 12.61 L10.18 12.93 L10.11 14.28 L7.89 14.28 L7.82 12.93 L7.06 12.61 L6.05 13.52 L4.48 11.95 L5.39 10.94 L5.07 10.18 L3.72 10.11 L3.72 7.89 L5.07 7.82 L5.39 7.06 L4.48 6.05 L6.05 4.48 L7.06 5.39 Z M6.90 9.00 A2.1 2.1 0 1 0 11.10 9.00 A2.1 2.1 0 1 0 6.90 9.00 Z" fill="#e2e2e2" fill-rule="evenodd"/></svg>
<span style="left:42.00px;top:763px;font-size:11px;font-weight:400;color:#e8e8e8;white-space:pre;letter-spacing:-0.354px;">00:00:02</span>
<span style="left:46.00px;top:780px;font-size:11px;font-weight:400;color:#c0c0c0;white-space:pre;letter-spacing:-0.116px;">Map 1</span>
<div style="left:3px;top:798px;width:118px;height:24px;background:#0a9afa;"></div>
<div style="left:6px;top:801px;width:53px;height:18px;background:#0b82d6;"></div>
<div style="left:65px;top:801px;width:53px;height:18px;background:#0b82d6;"></div>
<svg style="left:29px;top:804px;" width="8" height="12" viewBox="0 0 8 12"><path d="M1 1 L7 6 L1 11 Z" fill="#2a9bf0"/></svg>
<svg style="left:84px;top:803px;" width="16" height="14" viewBox="0 0 16 14"><g fill="none" stroke="#2a9bf0" stroke-width="1.2"><path d="M2 6.4 L2 3.4 L12.6 3.4 M10.6 1.2 L13 3.4 L10.6 5.6"/><path d="M14 7.6 L14 10.6 L3.4 10.6 M5.4 8.4 L3 10.6 L5.4 12.8"/></g></svg>
<div style="left:171px;top:781px;width:23.5px;height:3px;background:#fdaf1c;"></div>
<div style="left:181px;top:771px;width:3.6px;height:23px;background:#fdaf1c;"></div>
<div style="left:2px;top:823px;width:240px;height:16px;background:#2a2a2a;"></div>
<div style="left:2px;top:824px;width:119.5px;height:15px;background:#535353;"></div>
<div style="left:123px;top:824px;width:118.5px;height:15px;background:#535353;"></div>
<span style="left:59.00px;top:825px;font-size:12px;font-weight:400;color:#f4f4f4;white-space:pre;font-family:'Liberation Serif',serif;-webkit-text-stroke:0.35px #f4f4f4;">1</span>
<span style="left:178.94px;top:826px;font-size:11px;font-weight:400;color:#f4f4f4;white-space:pre;-webkit-text-stroke:0.3px #f4f4f4;">2</span>
<div style="left:2px;top:839px;width:1001px;height:13px;background:#2c2c2c;"></div>
<div style="left:5px;top:842px;width:995px;height:6px;background:#444444;border-radius:3px;"></div>
<div style="left:0px;top:852px;width:1003px;height:35px;background:#343434;"></div>
<span style="left:12.00px;top:860.5px;font-size:14px;font-weight:400;color:#ffffff;white-space:pre;letter-spacing:0.812px;-webkit-text-stroke:0.35px #fff;">00:00:00</span>
<div style="left:83px;top:858px;width:22px;height:22px;background:#0b82d6;border:3px solid #0a9afa;"></div>
<span style="left:90.29px;top:864px;font-size:9px;font-weight:700;color:#ffffff;white-space:pre;-webkit-text-stroke:0.3px #fff;">Q</span>
<div style="left:111px;top:858px;width:44px;height:22px;background:#0b82d6;border:3px solid #0a9afa;"></div>
<div style="left:131px;top:861px;width:5px;height:16px;background:#0a9afa;"></div>
<div style="left:136px;top:861px;width:16px;height:16px;background:#2f86de;"></div>
<div style="left:139px;top:863px;width:10px;height:12px;background:#3aa0f4;"></div>
<span style="left:117.99px;top:864px;font-size:9px;font-weight:700;color:#ffffff;white-space:pre;-webkit-text-stroke:0.3px #fff;">O</span>
<span style="left:140.49px;top:864px;font-size:9px;font-weight:700;color:#ffffff;white-space:pre;-webkit-text-stroke:0.3px #fff;">P</span>
<div style="left:161px;top:858px;width:22px;height:22px;background:#0b82d6;border:3px solid #0a9afa;"></div>
<div style="left:174px;top:862px;width:2px;height:14px;background:#2a9bf0;"></div>
<span style="left:167.55px;top:864px;font-size:9px;font-weight:700;color:#ffffff;white-space:pre;-webkit-text-stroke:0.3px #fff;">D</span>
<div style="left:205px;top:858px;width:22px;height:22px;background:#0b82d6;border:3px solid #0a9afa;"></div>
<svg style="left:208px;top:861px;" width="16" height="16" viewBox="0 0 16 16"><g fill="none" stroke="#2a9bf0" stroke-width="1.2"><path d="M1 4 L4 4 Q6 4 8 8 Q10 12 12 12 L14.6 12 M12.4 9.8 L14.8 12 L12.4 14.2"/><path d="M1 12 L4 12 Q6 12 8 8 Q10 4 12 4 L14.6 4 M12.4 1.8 L14.8 4 L12.4 6.2"/></g></svg>
<div style="left:235px;top:859px;width:2px;height:20px;background:#464646;"></div>
<div style="left:245px;top:858px;width:22px;height:22px;background:#0b82d6;border:3px solid #0a9afa;"></div>
<div style="left:251px;top:866px;width:10px;height:10px;background:#1089de;"></div>
<div style="left:250px;top:864px;width:12px;height:2px;background:#1089de;"></div>
<div style="left:254px;top:862px;width:4px;height:2px;background:#1089de;"></div>
<div style="left:273px;top:858px;width:22px;height:22px;background:#0b82d6;border:3px solid #0a9afa;"></div>
<div style="left:276px;top:866.5px;width:16px;height:5px;background:#2f9df2;"></div>
<div style="left:281.5px;top:861px;width:5px;height:16px;background:#2f9df2;"></div>
<div style="left:531px;top:852px;width:55px;height:13px;background:linear-gradient(#383838,#242424);border:1px solid #181818;border-top:none;border-radius:0 0 6px 6px;"></div>
<svg style="left:553.6px;top:855px;" width="10" height="7" viewBox="0 0 10 7"><path d="M1 0.8 L9 0.8 L5 6.2 Z" fill="#ffffff"/></svg>
<div style="left:821px;top:859px;width:39px;height:20px;background:#424242;border:1px solid #141414;border-radius:4px;"></div>
<div style="left:841px;top:860px;width:18px;height:18px;background:#fdaf1c;border-radius:0 3px 3px 0;"></div>
<div style="left:840px;top:860px;width:1px;height:18px;background:#141414;"></div>
<svg style="left:824.5px;top:862.0px;" width="14" height="14" viewBox="0 0 14 14"><g fill="none" stroke="#7c7c7c" stroke-width="1.2" stroke-linejoin="round"><path d="M5.2 1.6 L7.6 1.6 L9.6 12.2 L3 12.2 Z"/><path d="M3.4 10.2 L9.2 10.2"/><path d="M6.4 9.6 L10.8 4.2"/></g><circle cx="11" cy="4.2" r="1.1" fill="#7c7c7c"/></svg>
<svg style="left:843.0px;top:861.0px;" width="14" height="16" viewBox="0 0 14 16"><g fill="none" stroke="#222" stroke-width="1.2"><circle cx="7" cy="9" r="4.6"/><path d="M7 4.4 L7 2.6 M5.4 2.4 L8.6 2.4"/><path d="M7 6.4 L7 9.2 L9 9.2"/></g></svg>
<span style="left:869.00px;top:863px;font-size:12px;font-weight:400;color:#e0e0e0;white-space:pre;letter-spacing:-0.170px;">Default:</span>
<div style="left:918px;top:859px;width:74px;height:20px;background:#232323;border:1px solid #151515;border-radius:4px;"></div>
<span style="left:930.00px;top:863.5px;font-size:11px;font-weight:400;color:#f0f0f0;white-space:pre;letter-spacing:-0.354px;">00:00:02</span>
<svg style="left:981px;top:862px;" width="8" height="14" viewBox="0 0 8 14"><path d="M4 1.6 L6.2 4.8 L1.8 4.8 Z M4 12.4 L6.2 9.2 L1.8 9.2 Z" fill="#ffffff"/></svg>
<div style="left:1002px;top:729px;width:2px;height:158px;background:#2a2a2a;"></div>
<div style="left:1004px;top:729px;width:256px;height:158px;background:#343434;"></div>
<div style="left:1005px;top:729px;width:41px;height:28px;background:#464646;"></div>
<div style="left:1005px;top:729px;width:10px;height:28px;background:linear-gradient(#262626,#3a3a3a);"></div>
<svg style="left:1006px;top:738px;" width="8" height="10" viewBox="0 0 8 10"><path d="M6.2 1.8 L6.2 8.4 L1.8 5.1 Z" fill="#ffffff"/></svg>
<svg style="left:1020px;top:733px;" width="16" height="20" viewBox="0 0 16 20"><g fill="none" stroke="#e8b027" stroke-width="1.3" stroke-linejoin="round"><path d="M5.4 2 L8.4 2 L11 17.4 L2.6 17.4 Z"/><path d="M3.2 13.6 L10.4 13.6"/><path d="M4.4 13.2 L12 6"/></g><circle cx="12.4" cy="5.6" r="1.4" fill="#e8b027"/></svg>
<div style="left:1045px;top:729px;width:2px;height:158px;background:#2a2a2a;"></div>
<div style="left:1047px;top:729px;width:212px;height:28px;background:#464646;"></div>
<div style="left:1047px;top:729px;width:10px;height:28px;background:linear-gradient(#262626,#3a3a3a);"></div>
<svg style="left:1048px;top:738px;" width="8" height="10" viewBox="0 0 8 10"><path d="M1.8 1.8 L1.8 8.4 L6.2 5.1 Z" fill="#ffffff"/></svg>
<span style="left:1068.00px;top:737px;font-size:12px;font-weight:700;color:#f0f0f0;white-space:pre;letter-spacing:0.196px;">Audio Analysis</span>
<div style="left:1198px;top:732px;width:30px;height:22px;background:#0a9afa;"></div>
<div style="left:1201px;top:735px;width:24px;height:16px;background:#0b82d6;"></div>
<div style="left:1204px;top:738px;width:18px;height:10px;background:#1277c8;border-radius:5px;"></div>
<div style="left:1204px;top:738px;width:10px;height:10px;background:#0e7fd4;border-radius:5px;"></div>
<div style="left:1233px;top:733px;width:20px;height:20px;background:#262626;border:1px solid #1a1a1a;border-radius:4px;"></div>
<svg style="left:1234px;top:734px;" width="18" height="18" viewBox="0 0 18 18"><path d="M7.79 4.98 L7.85 3.52 L10.15 3.52 L10.21 4.98 L10.99 5.30 L12.06 4.31 L13.69 5.94 L12.70 7.01 L13.02 7.79 L14.48 7.85 L14.48 10.15 L13.02 10.21 L12.70 10.99 L13.69 12.06 L12.06 13.69 L10.99 12.70 L10.21 13.02 L10.15 14.48 L7.85 14.48 L7.79 13.02 L7.01 12.70 L5.94 13.69 L4.31 12.06 L5.30 10.99 L4.98 10.21 L3.52 10.15 L3.52 7.85 L4.98 7.79 L5.30 7.01 L4.31 5.94 L5.94 4.31 L7.01 5.30 Z M6.80 9.00 A2.2 2.2 0 1 0 11.20 9.00 A2.2 2.2 0 1 0 6.80 9.00 Z" fill="#e2e2e2" fill-rule="evenodd"/></svg>
<div style="left:1005px;top:757px;width:255px;height:2px;background:#2a2a2a;"></div>
<div style="left:1059px;top:766px;width:36px;height:114px;background:#3e3e3e;border:1px solid #161616;border-radius:6px;"></div>
<div style="left:1060px;top:767px;width:34px;height:25px;background:#343434;border-radius:5px 5px 0 0;"></div>
<div style="left:1060px;top:792px;width:34px;height:1px;background:#161616;"></div>
<span style="left:1065.00px;top:773px;font-size:12px;font-weight:400;color:#d0d0d0;white-space:pre;letter-spacing:-0.340px;">Gain</span>
<div style="left:1071.5px;top:803px;width:11px;height:66px;background:#0a9afa;"></div>
<div style="left:1074.5px;top:806px;width:5px;height:34px;background:#2f7fd8;"></div>
<div style="left:1074.5px;top:840px;width:5px;height:9px;background:#1f8be0;"></div>
<div style="left:1074.5px;top:849px;width:5px;height:17px;background:#35a2ea;"></div>
<div style="left:1106px;top:766px;width:1px;height:114px;background:#1c1c1c;"></div>
<div style="left:1118px;top:766px;width:36px;height:114px;background:#3e3e3e;border:1px solid #161616;border-radius:6px;"></div>
<div style="left:1119px;top:767px;width:34px;height:25px;background:#343434;border-radius:5px 5px 0 0;"></div>
<div style="left:1119px;top:792px;width:34px;height:1px;background:#161616;"></div>
<span style="left:1123.50px;top:773px;font-size:12px;font-weight:400;color:#d0d0d0;white-space:pre;letter-spacing:-0.422px;">Bass</span>
<div style="left:1128px;top:803px;width:16px;height:66px;background:#242424;border:1px solid #181818;border-radius:3px;"></div>
<div style="left:1165px;top:766px;width:36px;height:114px;background:#3e3e3e;border:1px solid #161616;border-radius:6px;"></div>
<div style="left:1166px;top:767px;width:34px;height:25px;background:#343434;border-radius:5px 5px 0 0;"></div>
<div style="left:1166px;top:792px;width:34px;height:1px;background:#161616;"></div>
<span style="left:1173.50px;top:773px;font-size:12px;font-weight:400;color:#d0d0d0;white-space:pre;letter-spacing:-0.115px;">Mid</span>
<div style="left:1175px;top:803px;width:16px;height:66px;background:#242424;border:1px solid #181818;border-radius:3px;"></div>
<div style="left:1211.5px;top:766px;width:36px;height:114px;background:#3e3e3e;border:1px solid #161616;border-radius:6px;"></div>
<div style="left:1212.5px;top:767px;width:34px;height:25px;background:#343434;border-radius:5px 5px 0 0;"></div>
<div style="left:1212.5px;top:792px;width:34px;height:1px;background:#161616;"></div>
<span style="left:1217.50px;top:773px;font-size:12px;font-weight:400;color:#d0d0d0;white-space:pre;letter-spacing:-0.172px;">High</span>
<div style="left:1221.5px;top:803px;width:16px;height:66px;background:#242424;border:1px solid #181818;border-radius:3px;"></div>
<div style="left:0px;top:31px;width:1px;height:857px;background:#a8a8a8;"></div>
<div style="left:0px;top:0px;width:1px;height:48px;background:#4c545a;"></div>
<div style="left:1260px;top:0px;width:1px;height:49px;background:#30353a;"></div>
<div style="left:1260px;top:49px;width:1px;height:839px;background:#b4b4b4;"></div>
<div style="left:0px;top:887px;width:1261px;height:1px;background:#b4b4b4;"></div>
</div></body></html>
